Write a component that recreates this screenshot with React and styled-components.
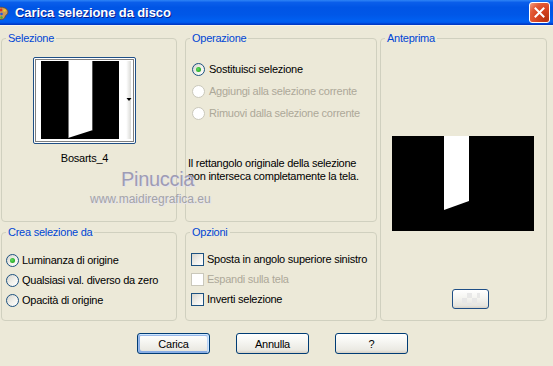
import React from 'react';
import styled, { createGlobalStyle, css } from 'styled-components';

const Global = createGlobalStyle`
  html, body { margin: 0; padding: 0; background: #ECE9D8; }
  body { font-family: "Liberation Sans", Arial, sans-serif; }
`;

const Window = styled.div`
  position: relative;
  width: 553px;
  height: 366px;
  overflow: hidden;
  background: #ECE9D8;
  font-family: "Liberation Sans", Arial, sans-serif;
  font-size: 11px;
  letter-spacing: -0.25px;
  color: #000;
`;

const TitleBar = styled.div`
  height: 25px;
  display: flex;
  align-items: center;
  background: linear-gradient(
    to bottom,
    #2E84F6 0%,
    #0A5EEA 10%,
    #0055E5 30%,
    #0057E8 60%,
    #0060F2 84%,
    #0059EC 90%,
    #0042D2 95%,
    #0036BE 100%
  );
  box-shadow: 0 1px 0 #F6F5EE;
`;

const AppIcon = styled.svg`
  flex: none;
  display: block;
`;

const Title = styled.div`
  margin-left: 6px;
  color: #fff;
  font-family: "Liberation Sans", Arial, sans-serif;
  font-weight: bold;
  font-size: 13px;
  letter-spacing: -0.1px;
  text-shadow: 1px 1px 0 #0A1C8C;
  white-space: nowrap;
`;

const CloseButton = styled.div`
  margin-left: auto;
  margin-right: 3px;
  width: 21px;
  height: 21px;
  box-sizing: border-box;
  border: 1px solid #fff;
  border-radius: 3px;
  background: radial-gradient(circle at 85% 85%, #B8320F 0%, #D94522 45%, #E25A36 70%, #EE8E70 92%, #F6B8A2 100%);
  display: flex;
  align-items: center;
  justify-content: center;
`;

const Body = styled.div`
  display: grid;
  grid-template-columns: 176px 8px 192px 3px 167px;
  grid-template-rows: 184px 10px 89px;
  grid-template-areas:
    "sel . op . prev"
    ". . . . prev"
    "crea . opt . prev";
  padding: 13px 0 0 1px;
`;

const Group = styled.div`
  position: relative;
  grid-area: ${(p) => p.$area};
  border: 1px solid #D0D0BF;
  border-radius: 4px;
  min-width: 0;
`;

const Legend = styled.div`
  position: absolute;
  top: -7px;
  left: 4px;
  padding: 0 2px;
  background: #ECE9D8;
  color: #0046D5;
  line-height: 13px;
  white-space: nowrap;
`;

const SelContent = styled.div`
  display: flex;
  flex-direction: column;
  align-items: center;
  width: 103px;
  margin-left: 31px;
  padding-top: 18px;
`;

const Thumb = styled.div`
  width: 103px;
  height: 87px;
  box-sizing: border-box;
  border: 1px solid #1F4F86;
  border-radius: 2px;
  background: #fff;
`;

const ThumbCaption = styled.div`
  margin-top: 8px;
  line-height: 13px;
`;

const Column = styled.div`
  display: flex;
  flex-direction: column;
  padding-top: ${(p) => p.$top}px;
`;

const OptionRow = styled.div`
  display: flex;
  align-items: center;
  height: ${(p) => p.$h}px;
  margin-left: ${(p) => p.$indent}px;
  gap: ${(p) => p.$gap}px;
  color: ${(p) => (p.$disabled ? '#ACA899' : '#000')};
  white-space: nowrap;
`;

const Radio = styled.span`
  flex: none;
  width: 13px;
  height: 13px;
  box-sizing: border-box;
  border-radius: 50%;
  border: 1px solid ${(p) => (p.$disabled ? '#CAC8BB' : '#1C5180')};
  background: ${(p) =>
    p.$disabled ? '#fff' : 'linear-gradient(135deg, #D6D5CE 0%, #F2F1EC 55%, #fff 100%)'};
  display: flex;
  align-items: center;
  justify-content: center;
  ${(p) =>
    p.$checked &&
    css`
      &::after {
        content: '';
        width: 5px;
        height: 5px;
        border-radius: 50%;
        background: radial-gradient(circle at 40% 40%, #63DE63 0%, #2CB02C 60%, #1E8F1E 100%);
      }
    `}
`;

const Check = styled.span`
  flex: none;
  width: 13px;
  height: 13px;
  box-sizing: border-box;
  border: 1px solid ${(p) => (p.$disabled ? '#CAC8BB' : '#1C5180')};
  background: ${(p) =>
    p.$disabled ? '#fff' : 'linear-gradient(135deg, #D6D5CE 0%, #F2F1EC 55%, #fff 100%)'};
`;

const Info = styled.div`
  margin-top: 33px;
  margin-left: 2px;
  line-height: 13px;
`;

const PreviewContent = styled.div`
  display: flex;
  flex-direction: column;
  align-items: flex-start;
  padding-top: 97px;
`;

const PreviewImage = styled.svg`
  display: block;
  margin-left: 11px;
`;

const SmallButton = styled.div`
  margin-top: 58px;
  margin-left: 71px;
  width: 37px;
  height: 20px;
  box-sizing: border-box;
  border: 1px solid #1F4F86;
  border-radius: 3px;
  background: linear-gradient(180deg, #fff 0%, #F4F4F0 45%, #E6E5DE 88%, #D6D0C5 100%);
  display: flex;
  align-items: center;
  justify-content: center;
`;

const Checker = styled.span`
  width: 18px;
  height: 12px;
  background-image: conic-gradient(#E6E6E6 25%, transparent 0 50%, #E6E6E6 0 75%, transparent 0);
  background-size: 10px 10px;
  opacity: 0.9;
`;

const ButtonRow = styled.div`
  display: flex;
  gap: 26px;
  padding-left: 137px;
  margin-top: 12px;
`;

const Button = styled.div`
  width: 73px;
  height: 21px;
  box-sizing: border-box;
  border: 1px solid #003C74;
  border-radius: 3px;
  background: linear-gradient(180deg, #fff 0%, #F6F6F2 40%, #EAE9E2 85%, #D6D0C5 100%);
  display: flex;
  align-items: center;
  justify-content: center;
  ${(p) =>
    p.$default &&
    css`
      box-shadow: inset -1px 1px #cee7ff, inset 1px 2px #98b8ea, inset -2px 2px #bcd4f6,
        inset 1px -1px #89ade4, inset 2px -2px #89ade4;
    `}
`;

const Watermark = styled.div`
  position: absolute;
  left: 90px;
  top: 167px;
  pointer-events: none;
  display: flex;
  flex-direction: column;
`;

const WmName = styled.div`
  margin-left: 31px;
  font-family: "Liberation Sans", Arial, sans-serif;
  font-size: 20px;
  line-height: 24px;
  letter-spacing: -0.3px;
  color: #9E9CB4;
  text-shadow: 1px 1px 0 #E4E2EC;
`;

const WmUrl = styled.div`
  margin-top: 1px;
  font-family: "Liberation Sans", Arial, sans-serif;
  font-size: 12px;
  line-height: 14px;
  letter-spacing: 0;
  color: #A3A3A8;
  text-shadow: 1px 1px 0 #E6E4EE;
`;

function ThumbPicture() {
  return (
    <svg width="101" height="85" viewBox="0 0 101 85">
      <defs>
        <linearGradient id="strip" x1="0" x2="1" y1="0" y2="0">
          <stop offset="0" stopColor="#fff" />
          <stop offset="0.6" stopColor="#fff" />
          <stop offset="1" stopColor="#DADAD6" />
        </linearGradient>
      </defs>
      <rect x="7" y="3" width="78" height="78" fill="#000" />
      <polygon points="34,3 59,3 59,72 34,80" fill="#fff" />
      <line x1="34.5" y1="3" x2="34.5" y2="80" stroke="#777" strokeWidth="1" />
      <line x1="58.5" y1="3" x2="58.5" y2="72" stroke="#555" strokeWidth="1" />
      <rect x="85" y="3" width="12" height="78" fill="url(#strip)" />
      <polygon points="92.5,40 97.5,40 95,43" fill="#000" />
      <rect x="1.5" y="1.5" width="98" height="82" fill="none" stroke="#000" strokeWidth="1" strokeDasharray="1 1" />
    </svg>
  );
}

function PreviewPicture() {
  return (
    <PreviewImage width="142" height="95" viewBox="0 0 142 95">
      <rect x="0" y="0" width="142" height="95" fill="#000" />
      <polygon points="52,0 77,0 77,65 52,74" fill="#fff" />
    </PreviewImage>
  );
}

function RadioOption({ label, checked, disabled, h, indent, gap }) {
  return (
    <OptionRow $h={h} $indent={indent} $gap={gap} $disabled={disabled}>
      <Radio $checked={checked} $disabled={disabled} />
      <span>{label}</span>
    </OptionRow>
  );
}

function CheckOption({ label, disabled }) {
  return (
    <OptionRow $h={20} $indent={5} $gap={3} $disabled={disabled}>
      <Check $disabled={disabled} />
      <span>{label}</span>
    </OptionRow>
  );
}

export default function App() {
  return (
    <>
      <Global />
      <Window>
        <TitleBar>
          <AppIcon width="9" height="16" viewBox="0 0 9 16">
            <path d="M-4 3 C2 1 8 3 8 7 C8 10 5 10 5 12 C5 15 -2 15 -4 13 Z" fill="#C8985A" stroke="#6A4A22" strokeWidth="0.8" />
            <circle cx="1" cy="5" r="1.4" fill="#E23020" />
            <circle cx="4.5" cy="5.5" r="1.3" fill="#F4D21E" />
            <circle cx="1.5" cy="9" r="1.3" fill="#2458E0" />
            <circle cx="1.5" cy="12.5" r="1.2" fill="#3BB43B" />
          </AppIcon>
          <Title>Carica selezione da disco</Title>
          <CloseButton>
            <svg width="11" height="11" viewBox="0 0 11 11">
              <path d="M1.5 1.5 L9.5 9.5 M9.5 1.5 L1.5 9.5" stroke="#fff" strokeWidth="2" strokeLinecap="square" />
            </svg>
          </CloseButton>
        </TitleBar>

        <Body>
          <Group $area="sel">
            <Legend>Selezione</Legend>
            <SelContent>
              <Thumb>
                <ThumbPicture />
              </Thumb>
              <ThumbCaption>Bosarts_4</ThumbCaption>
            </SelContent>
          </Group>

          <Group $area="op">
            <Legend>Operazione</Legend>
            <Column $top={19}>
              <RadioOption label="Sostituisci selezione" checked h={22} indent={6} gap={4} />
              <RadioOption label="Aggiungi alla selezione corrente" disabled h={22} indent={6} gap={4} />
              <RadioOption label="Rimuovi dalla selezione corrente" disabled h={22} indent={6} gap={4} />
              <Info>
                Il rettangolo originale della selezione
                <br />
                non interseca completamente la tela.
              </Info>
            </Column>
          </Group>

          <Group $area="prev">
            <Legend>Anteprima</Legend>
            <PreviewContent>
              <PreviewPicture />
              <SmallButton>
                <Checker />
              </SmallButton>
            </PreviewContent>
          </Group>

          <Group $area="crea">
            <Legend>Crea selezione da</Legend>
            <Column $top={17}>
              <RadioOption label="Luminanza di origine" checked h={20} indent={4} gap={3} />
              <RadioOption label="Qualsiasi val. diverso da zero" h={20} indent={4} gap={3} />
              <RadioOption label="Opacità di origine" h={20} indent={4} gap={3} />
            </Column>
          </Group>

          <Group $area="opt">
            <Legend>Opzioni</Legend>
            <Column $top={16}>
              <CheckOption label="Sposta in angolo superiore sinistro" />
              <CheckOption label="Espandi sulla tela" disabled />
              <CheckOption label="Inverti selezione" />
            </Column>
          </Group>
        </Body>

        <ButtonRow>
          <Button $default>Carica</Button>
          <Button>Annulla</Button>
          <Button>?</Button>
        </ButtonRow>

        <Watermark>
          <WmName>Pinuccia</WmName>
          <WmUrl>www.maidiregrafica.eu</WmUrl>
        </Watermark>
      </Window>
    </>
  );
}
